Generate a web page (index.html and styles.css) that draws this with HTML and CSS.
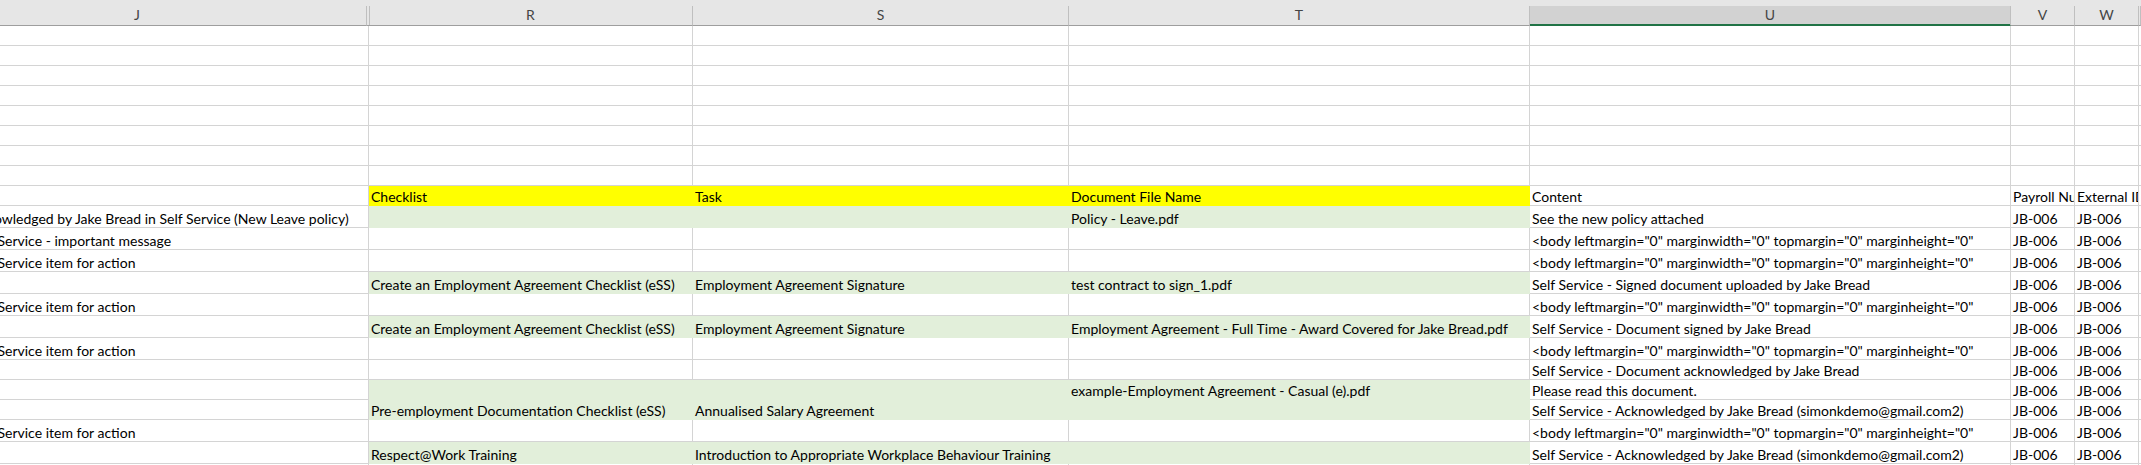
FILE: index.html
```html
<!DOCTYPE html>
<html lang="en">
<head>
  <meta charset="UTF-8">
  <title>Sheet - Self Service messages</title>
  <link rel="stylesheet" href="styles.css">
</head>
<body>

<div class="sheet">
  <div class="colhead">
    <div class="hd hd-j">J</div>
    <div class="hd hd-r">R</div>
    <div class="hd">S</div>
    <div class="hd">T</div>
    <div class="hd selected">U</div>
    <div class="hd">V</div>
    <div class="hd">W</div>
    <div class="hd"></div>
  </div>

  <!-- blank rows above the table -->
  <div class="row"><div class="c"></div><div class="c"></div><div class="c"></div><div class="c"></div><div class="c"></div><div class="c"></div><div class="c"></div><div class="c"></div></div>
  <div class="row"><div class="c"></div><div class="c"></div><div class="c"></div><div class="c"></div><div class="c"></div><div class="c"></div><div class="c"></div><div class="c"></div></div>
  <div class="row"><div class="c"></div><div class="c"></div><div class="c"></div><div class="c"></div><div class="c"></div><div class="c"></div><div class="c"></div><div class="c"></div></div>
  <div class="row"><div class="c"></div><div class="c"></div><div class="c"></div><div class="c"></div><div class="c"></div><div class="c"></div><div class="c"></div><div class="c"></div></div>
  <div class="row"><div class="c"></div><div class="c"></div><div class="c"></div><div class="c"></div><div class="c"></div><div class="c"></div><div class="c"></div><div class="c"></div></div>
  <div class="row"><div class="c"></div><div class="c"></div><div class="c"></div><div class="c"></div><div class="c"></div><div class="c"></div><div class="c"></div><div class="c"></div></div>
  <div class="row"><div class="c"></div><div class="c"></div><div class="c"></div><div class="c"></div><div class="c"></div><div class="c"></div><div class="c"></div><div class="c"></div></div>
  <div class="row"><div class="c"></div><div class="c"></div><div class="c"></div><div class="c"></div><div class="c"></div><div class="c"></div><div class="c"></div><div class="c"></div></div>

  <!-- table headings -->
  <div class="row">
    <div class="c"></div>
    <div class="c yellow">Checklist</div>
    <div class="c yellow">Task</div>
    <div class="c yellow">Document File Name</div>
    <div class="c">Content</div>
    <div class="c">Payroll Number</div>
    <div class="c">External ID</div>
    <div class="c"></div>
  </div>

  <div class="row tall">
    <div class="c spill ack">Acknowledged by Jake Bread in Self Service (New Leave policy)</div>
    <div class="c green"></div>
    <div class="c green"></div>
    <div class="c green">Policy - Leave.pdf</div>
    <div class="c">See the new policy attached</div>
    <div class="c">JB-006</div>
    <div class="c">JB-006</div>
    <div class="c"></div>
  </div>
  <div class="row tall">
    <div class="c spill">Self Service - important message</div>
    <div class="c"></div>
    <div class="c"></div>
    <div class="c"></div>
    <div class="c">&lt;body leftmargin="0" marginwidth="0" topmargin="0" marginheight="0"</div>
    <div class="c">JB-006</div>
    <div class="c">JB-006</div>
    <div class="c"></div>
  </div>
  <div class="row tall">
    <div class="c spill">Self Service item for action</div>
    <div class="c"></div>
    <div class="c"></div>
    <div class="c"></div>
    <div class="c">&lt;body leftmargin="0" marginwidth="0" topmargin="0" marginheight="0"</div>
    <div class="c">JB-006</div>
    <div class="c">JB-006</div>
    <div class="c"></div>
  </div>
  <div class="row tall">
    <div class="c"></div>
    <div class="c green">Create an Employment Agreement Checklist (eSS)</div>
    <div class="c green">Employment Agreement Signature</div>
    <div class="c green">test contract to sign_1.pdf</div>
    <div class="c">Self Service - Signed document uploaded by Jake Bread</div>
    <div class="c">JB-006</div>
    <div class="c">JB-006</div>
    <div class="c"></div>
  </div>
  <div class="row tall">
    <div class="c spill">Self Service item for action</div>
    <div class="c"></div>
    <div class="c"></div>
    <div class="c"></div>
    <div class="c">&lt;body leftmargin="0" marginwidth="0" topmargin="0" marginheight="0"</div>
    <div class="c">JB-006</div>
    <div class="c">JB-006</div>
    <div class="c"></div>
  </div>
  <div class="row tall">
    <div class="c"></div>
    <div class="c green">Create an Employment Agreement Checklist (eSS)</div>
    <div class="c green">Employment Agreement Signature</div>
    <div class="c green">Employment Agreement - Full Time - Award Covered for Jake Bread.pdf</div>
    <div class="c">Self Service - Document signed by Jake Bread</div>
    <div class="c">JB-006</div>
    <div class="c">JB-006</div>
    <div class="c"></div>
  </div>
  <div class="row tall">
    <div class="c spill">Self Service item for action</div>
    <div class="c"></div>
    <div class="c"></div>
    <div class="c"></div>
    <div class="c">&lt;body leftmargin="0" marginwidth="0" topmargin="0" marginheight="0"</div>
    <div class="c">JB-006</div>
    <div class="c">JB-006</div>
    <div class="c"></div>
  </div>
  <div class="row">
    <div class="c"></div>
    <div class="c"></div>
    <div class="c"></div>
    <div class="c"></div>
    <div class="c">Self Service - Document acknowledged by Jake Bread</div>
    <div class="c">JB-006</div>
    <div class="c">JB-006</div>
    <div class="c"></div>
  </div>
  <div class="row">
    <div class="c"></div>
    <div class="c green"></div>
    <div class="c green"></div>
    <div class="c green">example-Employment Agreement - Casual (e).pdf</div>
    <div class="c">Please read this document.</div>
    <div class="c">JB-006</div>
    <div class="c">JB-006</div>
    <div class="c"></div>
  </div>
  <div class="row">
    <div class="c"></div>
    <div class="c green">Pre-employment Documentation Checklist (eSS)</div>
    <div class="c green">Annualised Salary Agreement</div>
    <div class="c green"></div>
    <div class="c">Self Service - Acknowledged by Jake Bread (simonkdemo@gmail.com2)</div>
    <div class="c">JB-006</div>
    <div class="c">JB-006</div>
    <div class="c"></div>
  </div>
  <div class="row tall">
    <div class="c spill">Self Service item for action</div>
    <div class="c"></div>
    <div class="c"></div>
    <div class="c"></div>
    <div class="c">&lt;body leftmargin="0" marginwidth="0" topmargin="0" marginheight="0"</div>
    <div class="c">JB-006</div>
    <div class="c">JB-006</div>
    <div class="c"></div>
  </div>
  <div class="row tall">
    <div class="c"></div>
    <div class="c green">Respect@Work Training</div>
    <div class="c green">Introduction to Appropriate Workplace Behaviour Training</div>
    <div class="c green"></div>
    <div class="c">Self Service - Acknowledged by Jake Bread (simonkdemo@gmail.com2)</div>
    <div class="c">JB-006</div>
    <div class="c">JB-006</div>
    <div class="c"></div>
  </div>
  <div class="row tall">
    <div class="c"></div><div class="c"></div><div class="c"></div><div class="c"></div><div class="c"></div><div class="c"></div><div class="c"></div><div class="c"></div>
  </div>
</div>

</body>
</html>
```

FILE: styles.css
```css
html, body {
  margin: 0;
  overflow: hidden;
  background: #fff;
}
body {
  font-family: Lato, "Liberation Sans", sans-serif;
  font-size: 14px;
  color: #000;
}
.sheet {
  width: 2141px;
}
.colhead, .row {
  display: grid;
  grid-template-columns: 369px 324px 376px 461px 481px 64px 64px 1fr;
}

/* column letters */
.colhead {
  height: 26px;
  padding-top: 6px;
  box-sizing: border-box;
  background: linear-gradient(#e6e6e6 25px, #9e9e9e 25px);
}
.hd {
  height: 20px;
  box-sizing: border-box;
  border-right: 1px solid #bfbfbf;
  border-bottom: 1px solid #9e9e9e;
  display: flex;
  justify-content: center;
  align-items: flex-end;
  padding-bottom: 2px;
  line-height: 17px;
  color: #444;
}
.hd-j {
  margin-right: 2px;
  padding-right: 92px; /* column starts off screen, label sits left of centre */
}
.hd-r {
  box-shadow: inset 1px 0 #bfbfbf;
}
.hd.selected {
  background: #d2d2d2;
  border-bottom-color: #217346;
  box-shadow: inset 0 -1px #217346;
}

/* cells */
.row {
  height: 20px;
}
.row.tall {
  height: 22px;
}
.c {
  box-sizing: border-box;
  border-right: 1px solid #d4d4d4;
  border-bottom: 1px solid #d4d4d4;
  padding-left: 2px;
  display: flex;
  align-items: flex-end;
  line-height: 17px;
  white-space: nowrap;
  overflow: hidden;
}
.c.yellow {
  background: #ffff00;
  border-color: #ffff00;
}
.c.green {
  background: #e2efda;
  border-color: #e2efda;
}
/* text spilling in from the hidden column on the left */
.c.spill {
  text-indent: -31px;
}
.c.spill.ack {
  text-indent: -39px;
}
```
